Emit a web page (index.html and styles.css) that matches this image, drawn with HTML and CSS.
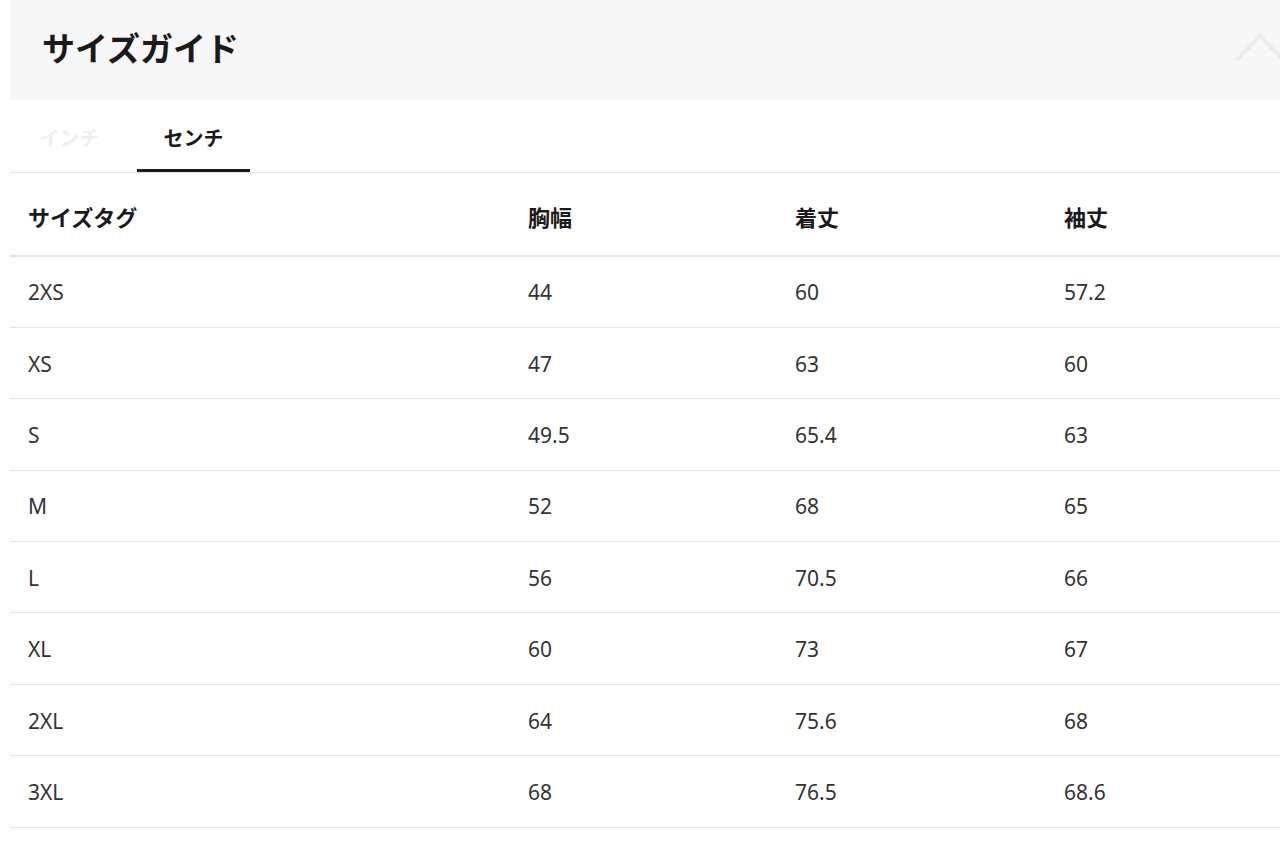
FILE: index.html
```html
<!DOCTYPE html>
<html lang="ja">
<head>
<meta charset="utf-8">
<link rel="stylesheet" href="styles.css">
</head>
<body>
<div class="guide">
  <div class="guide-header">
    <h1 class="guide-title">サイズガイド</h1>
    <svg class="chevron" viewBox="0 0 48 34" width="48" height="34"><path d="M2 28 L24 4 L46 28" fill="none" stroke="#ececec" stroke-width="4" stroke-linecap="round" stroke-linejoin="round"/></svg>
  </div>
  <div class="tabs">
    <div class="tab">インチ</div>
    <div class="tab active">センチ</div>
  </div>
  <table class="size-table">
    <colgroup>
      <col class="c1"><col class="c2"><col class="c3"><col class="c4">
    </colgroup>
    <thead>
      <tr><th>サイズタグ</th><th>胸幅</th><th>着丈</th><th>袖丈</th></tr>
    </thead>
    <tbody>
      <tr><td>2XS</td><td>44</td><td>60</td><td>57.2</td></tr>
      <tr><td>XS</td><td>47</td><td>63</td><td>60</td></tr>
      <tr><td>S</td><td>49.5</td><td>65.4</td><td>63</td></tr>
      <tr><td>M</td><td>52</td><td>68</td><td>65</td></tr>
      <tr><td>L</td><td>56</td><td>70.5</td><td>66</td></tr>
      <tr><td>XL</td><td>60</td><td>73</td><td>67</td></tr>
      <tr><td>2XL</td><td>64</td><td>75.6</td><td>68</td></tr>
      <tr><td>3XL</td><td>68</td><td>76.5</td><td>68.6</td></tr>
    </tbody>
  </table>
</div>
</body>
</html>
```
FILE: styles.css
```css
html, body {
  margin: 0;
  padding: 0;
  background: #fff;
  overflow: hidden;
}
body {
  font-family: "Noto Sans", "Noto Sans CJK JP", sans-serif;
  color: #333;
}
.guide {
  margin-left: 10px;
  width: 1270px;
}
.guide-header {
  height: 100px;
  background: #f7f7f7;
  display: flex;
  align-items: center;
  justify-content: space-between;
  padding-left: 32px;
  box-sizing: border-box;
}
.guide-title {
  margin: 0;
  font-size: 33px;
  font-weight: 700;
  color: #1a1a1a;
  line-height: 1;
  font-family: "Noto Sans CJK JP", sans-serif;
  position: relative;
  top: -3px;
}
.chevron {
  align-self: flex-start;
  margin-top: 31px;
  margin-right: -4px;
  overflow: visible;
}
.tabs {
  display: flex;
  gap: 11px;
  padding-left: 3px;
  height: 73px;
  border-bottom: 1px solid #e6e6e6;
  box-sizing: border-box;
}
.tab {
  width: 113px;
  display: flex;
  align-items: center;
  justify-content: center;
  font-family: "Noto Sans CJK JP", sans-serif;
  font-size: 20px;
  font-weight: 700;
  color: #f0f0f0;
  box-sizing: border-box;
  border-bottom: 3px solid transparent;
  padding-top: 5px;
}
.tab.active {
  color: #1a1a1a;
  border-bottom-color: #1a1a1a;
}
.size-table {
  width: 1270px;
  border-collapse: collapse;
  table-layout: fixed;
}
.c1 { width: 500px; }
.c2 { width: 267px; }
.c3 { width: 269px; }
.c4 { width: 234px; }
.size-table th {
  text-align: left;
  font-family: "Noto Sans CJK JP", sans-serif;
  font-size: 22px;
  font-weight: 700;
  color: #1a1a1a;
  height: 83px;
  padding: 3px 0 0 18px;
  border-bottom: 2px solid #e6e6e6;
  box-sizing: border-box;
}
.size-table td {
  font-size: 21px;
  color: #333;
  height: 71.4px;
  padding: 1px 0 0 18px;
  border-bottom: 1px solid #e6e6e6;
  box-sizing: border-box;
}
```
